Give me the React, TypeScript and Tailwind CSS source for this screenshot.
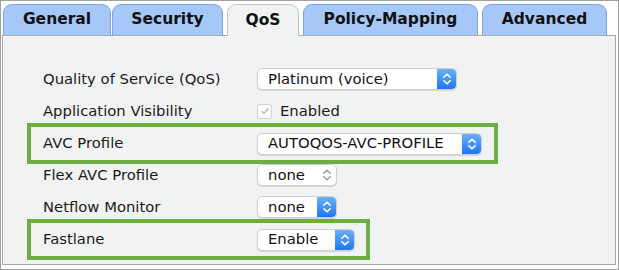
import React from 'react';

const tabs = [
  { label: 'General', w: 'w-[108px]', ml: 'ml-0' },
  { label: 'Security', w: 'w-[111px]', ml: 'ml-[1px]' },
  { label: 'QoS', w: 'w-[72px]', ml: 'ml-[4px]', active: true },
  { label: 'Policy-Mapping', w: 'w-[175px]', ml: 'ml-[4px]' },
  { label: 'Advanced', w: 'w-[125px]', ml: 'ml-[4px]' },
];

function Chevrons({ color }: { color: string }) {
  return (
    <svg width="10" height="14" viewBox="0 0 10 14" fill="none">
      <path d="M1.8 5.3 L5 2.2 L8.2 5.3" stroke={color} strokeWidth="1.6" strokeLinecap="round" strokeLinejoin="round" />
      <path d="M1.8 8.7 L5 11.8 L8.2 8.7" stroke={color} strokeWidth="1.6" strokeLinecap="round" strokeLinejoin="round" />
    </svg>
  );
}

function Select({ value, width, blue = true }: { value: string; width: string; blue?: boolean }) {
  return (
    <div className={`${width} h-[22px] flex items-stretch rounded-[5px] bg-white border border-[#cfcfcf] shadow-[0_1px_1px_rgba(0,0,0,0.12)] overflow-hidden`}>
      <div className="flex-1 flex items-center pl-[10px] text-[14.8px] text-[#111] leading-none">{value}</div>
      {blue ? (
        <div className="w-[19px] flex items-center justify-center bg-gradient-to-b from-[#68b0fb] to-[#1a76f2] rounded-r-[4px]">
          <Chevrons color="#ffffff" />
        </div>
      ) : (
        <div className="w-[19px] flex items-center justify-center">
          <Chevrons color="#a0a0a0" />
        </div>
      )}
    </div>
  );
}

function Row({ label, children, highlight }: { label: string; children: React.ReactNode; highlight?: string }) {
  if (highlight) {
    return (
      <div className={`${highlight} -mt-[4px] -mb-[5px] h-[41px] flex items-center border-[4px] border-[#6cae3f] pl-[12px]`}>
        <div className="w-[214px] text-[14.8px] text-[#1a1a1a]">{label}</div>
        {children}
      </div>
    );
  }
  return (
    <div className="h-[32px] flex items-center pl-[16px]">
      <div className="w-[214px] text-[14.8px] text-[#1a1a1a]">{label}</div>
      {children}
    </div>
  );
}

export default function App() {
  return (
    <div className="w-[619px] h-[270px] bg-white border border-[#a0a0a0] overflow-hidden" style={{ fontFamily: '"DejaVu Sans", Verdana, sans-serif' }}>
      <div className="flex items-end pt-[2px] pl-[2px] h-[34px]">
        {tabs.map(t =>
          t.active ? (
            <div key={t.label} className={`${t.w} ${t.ml} relative z-10 h-[32px] -mb-px flex items-center justify-center rounded-t-[9px] border border-b-0 border-[#c4c4c4] bg-[#f1f2f2] font-bold text-[15.5px] text-[#111]`}>
              {t.label}
            </div>
          ) : (
            <div key={t.label} className={`${t.w} ${t.ml} h-[31px] flex items-center justify-center rounded-t-[9px] border border-b-0 border-[#7fa6e0] bg-[#a6c8f8] font-bold text-[15.5px] text-[#111]`}>
              {t.label}
            </div>
          )
        )}
      </div>
      <div className="ml-[1px] w-[614px] h-[230px] bg-[#f1f2f2] border border-[#a8a8a8] pt-[27px] pl-[24px]">
        <Row label="Quality of Service (QoS)">
          <Select value="Platinum (voice)" width="w-[200px]" />
        </Row>
        <Row label="Application Visibility">
          <div className="flex items-center">
            <div className="w-[15px] h-[15px] rounded-[3px] border border-[#d0d0d0] bg-white flex items-center justify-center">
              <svg width="10" height="10" viewBox="0 0 10 10" fill="none">
                <path d="M2 5.5 L4 7.5 L8 2.5" stroke="#b5b5b5" strokeWidth="1.3" strokeLinecap="round" strokeLinejoin="round" />
              </svg>
            </div>
            <span className="ml-[8px] text-[14.8px] text-[#1a1a1a]">Enabled</span>
          </div>
        </Row>
        <Row label="AVC Profile" highlight="w-[471px]">
          <Select value="AUTOQOS-AVC-PROFILE" width="w-[225px]" />
        </Row>
        <Row label="Flex AVC Profile">
          <Select value="none" width="w-[80px]" blue={false} />
        </Row>
        <Row label="Netflow Monitor">
          <Select value="none" width="w-[80px]" />
        </Row>
        <Row label="Fastlane" highlight="w-[343px]">
          <Select value="Enable" width="w-[98px]" />
        </Row>
      </div>
    </div>
  );
}
